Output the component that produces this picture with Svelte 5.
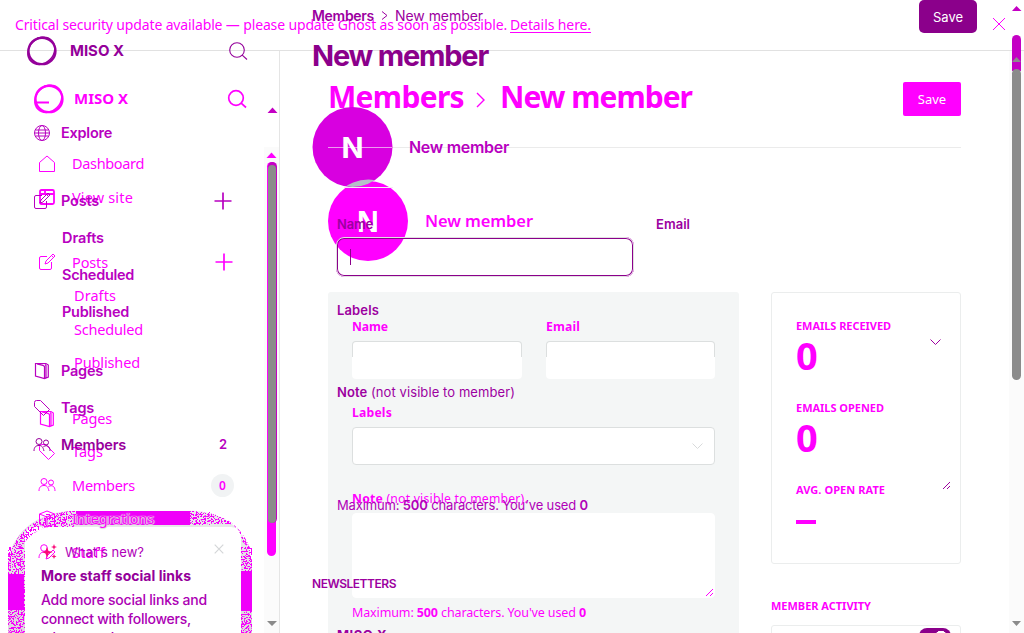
<script>
  function fit(node, width) {
    const natural = node.getBoundingClientRect().width;
    node.style.letterSpacing = (width - natural) / node.textContent.length + 'px';
  }
  const baseNav = [
    { t: 'Dashboard', w: 72, i: 'home' },
    { t: 'View site', w: 61, i: 'site' },
    { t: 'Posts', w: 36, i: 'edit', gap: 32, plus: true },
    { t: 'Drafts', w: 42, sub: true },
    { t: 'Scheduled', w: 69, sub: true },
    { t: 'Published', w: 66, sub: true },
    { t: 'Pages', w: 40, i: 'pages', gap: 22.5 },
    { t: 'Tags', w: 31, i: 'tag' },
    { t: 'Members', w: 63, i: 'people', count: '0' },
    { t: 'Integrations', w: 82, i: 'box', halo: true },
    { t: 'Staff', w: 33, i: 'staff' }
  ];
  const topNav = [
    { t: 'Explore', w: 51, i: 'globe' },
    { t: 'Posts', w: 38, i: 'edit', gap: 31, plus: true },
    { t: 'Drafts', w: 42, sub: true },
    { t: 'Scheduled', w: 72, sub: true },
    { t: 'Published', w: 67, sub: true },
    { t: 'Pages', w: 42, i: 'pages', gap: 22 },
    { t: 'Tags', w: 33, i: 'tag' },
    { t: 'Members', w: 65, i: 'people', count: '2', active: true }
  ];
  const stats = [
    { t: 'EMAILS RECEIVED', w: 95, v: '0' },
    { t: 'EMAILS OPENED', w: 88, v: '0' },
    { t: 'AVG. OPEN RATE', w: 89, v: '' }
  ];
</script>

{#snippet icon(name)}
  <svg class="icon" width="18" height="18" viewBox="0 0 18 18">
    {#if name === 'home'}<path d="M1.5 7.5 9 1l7.5 6.5v9h-15z" />
    {:else if name === 'site'}<path stroke-width="1.8" d="M3.500 2h11Q16 2 16 3.500v11q0 1.500-1.500 1.500h-11Q2 16 2 14.500v-11Q2 2 3.500 2zM2 6h14M7 2v4" />
    {:else if name === 'edit'}<path d="M9 3.5H3Q1.500 3.500 1.500 5v10q0 1.500 1.500 1.500h9q1.500 0 1.500-1.500V9M7 11l1-3 7-7 2 2-7 7zM13.5 2.5l2 2" />
    {:else if name === 'pages'}<path stroke-width="1.200" d="M2.5 1.5h10.500l2.300 1.500v12L11.500 16.5 2.5 14zM4 1.800l6 1.500 1.500 1.200v12M12 2.5l1 1v12" />
    {:else if name === 'tag'}<path d="M1.5 3.500q0-2 2-2h4l9 9-6 6-9-9z" />
    {:else if name === 'people'}<circle cx="6" cy="5.500" r="3" /><circle cx="13" cy="6.500" r="2.5" /><path d="M1 15c0-4 2-5.500 5-5.500s4 1.500 5 5.500M10.500 10.500c4-2 6.500 0 6.500 4.500" />
    {:else if name === 'box'}<path d="m9 1 7.5 3v10L9 17l-7.500-3V4zM1.500 4 9 7l7.500-3M9 7v10" />
    {:else if name === 'staff'}<circle cx="6" cy="5" r="3.3" /><path d="M1 15c0-4 2-6 5-6 2 0 3 1 3 1M8 16l1-3 6-6 2 2-6 6z" />
    {:else if name === 'globe'}<circle cx="9" cy="9" r="7.5" /><ellipse cx="9" cy="9" rx="3.5" ry="7.500" /><path d="M2.500 6h13M2.500 12h13M1.500 9h15" />{/if}
  </svg>
{/snippet}

{#snippet ring(cut)}
  <svg width="32" height="32" viewBox="0 0 32 32" fill="none" stroke="currentColor">
    <ellipse cx="17" cy="16" rx="13.5" ry="13.2" stroke-width="2.3" />
    <ellipse cx="16.500" cy="15.800" rx="14.600" ry="12.300" stroke-width="1.600" transform="rotate(-45 16.500 16)" />
    <path d="M12 3Q20 0 27 6" stroke-width="1" />
    {#if cut}<path d="M4 19.500h13" stroke-width="2" />{/if}
  </svg>
{/snippet}

{#snippet search(heavy)}
  <svg width="20" height="20" viewBox="0 0 20 20" fill="none" stroke="currentColor" stroke-width={heavy ? 1.7 : 1.1}><circle cx="9" cy="9" r="7.300" /><path d="m14.200 14.200 4.800 4.300" /></svg>
{/snippet}

{#snippet nav(items)}
  {#each items as n}
    <div class="row" class:sub={n.sub} class:halo={n.halo} class:active={n.active} style:margin-top={(n.gap ?? 0) + 'px'}>
      {#if n.i}{@render icon(n.i)}{/if}
      <span class="label"><span use:fit={n.w}>{n.t}</span></span>
      {#if n.plus}<svg class="plus" width="18" height="18" viewBox="0 0 18 18"><path d="M9 .5v17M.500 9h17" /></svg>{/if}
      {#if n.count}<b class="count">{n.count}</b>{/if}
    </div>
  {/each}
{/snippet}

<div class="page">
  <svg class="glow" width="250" height="130" viewBox="0 0 250 130">
    <defs>
      <filter id="grain" x="0" y="0" width="100%" height="100%">
        <feTurbulence type="fractalNoise" baseFrequency=".6" numOctaves="2" seed="4" />
        <feColorMatrix values="0 0 0 0 .94  0 0 0 0 0  0 0 0 0 .98  24 0 0 0 -12" />
        <feComposite in2="SourceGraphic" operator="in" />
      </filter>
      <linearGradient id="fade" x1="0" x2="0" y1="0" y2="1"><stop offset="0" stop-color="#e9ebeb" /><stop offset="1" stop-color="#dadada" /></linearGradient>
    </defs>
    <path fill="url(#fade)" d="M0 130V55C2 22 28 2 62 0h125c32 2 53 20 57 52v78h-11V26q0-10-10-10H27q-10 0-10 10v104z" />
    <g fill="#f000fa" filter="url(#grain)">
      <path d="M0 130V36h17v94zM233 130V36h11v94zM2 44C8 20 30 4 62 0h125c30 2 48 16 56 40l-9-10q-2-14-12-17H56Q26 14 12 38z" />
      <path d="M38 3h30v13H38zM178 1h24v13h-24z" />
    </g>
    <path fill="#f000fa" d="M0 63h16v36H0zM233 60h11v40h-11zM68 0h114v14H68z" />
  </svg>

  <div class="layer base">
    <div class="banner">
      <span><span use:fit={492}>Critical security update available — please update Ghost as soon as possible.</span><u use:fit={81}>Details here.</u></span>
      <svg width="14" height="14" viewBox="0 0 14 14"><path d="m1 1 12 12M13 1 1 13" /></svg>
    </div>
    <div class="body">
      <aside>
        <div class="brand">{@render ring(true)}<span class="label"><b use:fit={54}>MISO X</b></span>{@render search(true)}</div>
        <nav>{@render nav(baseNav)}</nav>
      </aside>
      <main>
        <header>
          <h1><span use:fit={136}>Members</span><svg width="10" height="16" viewBox="0 0 10 16"><path d="m1 1 7 7-7 7" /></svg><span use:fit={192}>New member</span></h1>
          <button>Save</button>
        </header>
        <div class="person"><div class="avatar">N</div><b use:fit={108}>New member</b></div>
        <div class="content">
          <section class="panel">
            <div class="pair">
              <div><label for="an"><b use:fit={36}>Name</b></label><div class="box" id="an"></div></div>
              <div><label for="ae"><b use:fit={34}>Email</b></label><div class="box" id="ae"></div></div>
            </div>
            <label for="al"><b use:fit={40}>Labels</b></label>
            <div class="box full" id="al"><svg width="11" height="7" viewBox="0 0 11 7"><path d="m.5.5 5 5 5-5" /></svg></div>
            <label for="at"><span use:fit={176}><b>Note</b> (not visible to member).</span></label>
            <div class="area" id="at"><svg width="9" height="9" viewBox="0 0 9 9"><path d="M1 8 8 1M5 8l3-3" /></svg></div>
            <p><span use:fit={234}>Maximum: <b>500</b> characters. You've used <b>0</b></span></p>
          </section>
          <section class="side">
            <div class="stats">
              {#each stats as s}
                <div class="stat"><div class="cap"><b use:fit={s.w}>{s.t}</b></div>
                  {#if s.v}<div class="num">{s.v}</div>{:else}<div class="dash"></div>{/if}</div>
              {/each}
            </div>
            <div class="cap activity"><b use:fit={100}>MEMBER ACTIVITY</b></div>
            <div class="feed"></div>
          </section>
        </div>
      </main>
    </div>
  </div>

  <div class="layer over">
    <aside>
      <div class="brand">{@render ring(false)}<span class="label"><b use:fit={54}>MISO X</b></span>{@render search(false)}</div>
      <nav>{@render nav(topNav)}</nav>
      <article>
        <div class="whats">
          <svg width="16" height="16" viewBox="0 0 16 16"><path fill="#fa0a78" d="m6 3 1.500 4L12 8 7.500 9.500 6 14 4.500 9.500 1 8l3.500-1zM13 0l.8 2.200L16 3l-2.200.8L13 6l-.8-2.200L10 3l2.200-.8zM13 10l.7 1.800 1.800.7-1.800.7L13 15l-.7-1.800-1.800-.7 1.800-.7z" /></svg>
          <span class="label"><span use:fit={79}>What's new?</span></span>
          <svg class="shut" width="10" height="10" viewBox="0 0 10 10"><path stroke="#d4d6d8" stroke-width="1.200" d="m.7.7 8.600 8.600M9.300.7.7 9.300" /></svg>
        </div>
        <h3><span use:fit={150}>More staff social links</span></h3>
        <div class="copy"><span use:fit={166}>Add more social links and</span><br /><span use:fit={150}>connect with followers,</span><br /><span use:fit={118}>wherever they are</span></div>
      </article>
    </aside>
    <main>
      <div class="top">
        <span class="crumb"><b use:fit={62}>Members</b><svg width="7" height="9" viewBox="0 0 7 9"><path d="m1 .5 5 4-5 4" /></svg><span use:fit={88}>New member</span></span>
        <button>Save</button>
      </div>
      <h1><span use:fit={176}>New member</span></h1>
      <div class="person">
        <svg width="81" height="82" viewBox="0 0 81 82">
          <defs><clipPath id="disc"><circle cx="40.500" cy="41" r="40" /></clipPath></defs>
          <circle cx="40.500" cy="41" r="40" fill="#d800e0" />
          <circle cx="56.500" cy="113.500" r="40" fill="#b5bfc8" clip-path="url(#disc)" />
          <path d="M16 41.500h64" stroke="#ee9af0" />
          <path d="M32 81.500h49" stroke="#f5eaf5" />
          <text x="40.500" y="52" text-anchor="middle" fill="#fff" font-size="29" font-weight="700">N</text>
        </svg>
        <b use:fit={100}>New member</b>
      </div>
      <div class="form">
        <div class="two">
          <div><label for="bn"><b use:fit={36}>Name</b></label><div class="focus" id="bn"><i></i></div></div>
          <div><label for="be"><b use:fit={34}>Email</b></label><div id="be"></div></div>
        </div>
        <label class="l2" for="bl"><b use:fit={42}>Labels</b></label>
        <div class="pick" id="bl"><svg width="11" height="7" viewBox="0 0 11 7"><path d="m.5.5 5 5 5-5" /></svg></div>
        <label class="l3" for="bt"><span use:fit={178}><b>Note</b> (not visible to member)</span></label>
        <div class="note" id="bt"><svg width="9" height="9" viewBox="0 0 9 9"><path d="M1 8 8 1M5 8l3-3" /></svg></div>
        <p><span use:fit={251}>Maximum: <b>500</b> characters. You’ve used <b>0</b></span></p>
      </div>
      <div class="news"><b use:fit={84}>NEWSLETTERS</b></div>
      <div class="last"><b use:fit={50}>MISO X</b><span class="toggle"></span></div>
    </main>
  </div>

  <svg class="bars" width="1024" height="633" viewBox="0 0 1024 633">
    <path fill="#fafafa" fill-opacity=".8" d="M264 147h15v486h-15zM1009 51h15v582h-15z" />
    <path fill="#c400c4" d="m267.500 113 5-5.500 5 5.500zM1012 11l4.500-5 5 5z" />
    <path fill="#ff00ff" d="m266.500 158 5-5.500 5 5.500z" />
    <rect x="267" y="162" width="9" height="394" rx="4.500" fill="#ff00ff" />
    <rect x="268" y="162" width="9" height="361" rx="4.500" fill="#c400c4" />
    <rect x="268" y="165" width="8" height="358" rx="4" fill="#8b8b8b" />
    <path fill="#c400c4" d="M1012 71V39.500a4.500 4.500 0 0 1 9 0V71z" />
    <rect x="1012" y="69" width="9" height="311" rx="4.500" fill="#8b8b8b" />
    <path fill="#8b8b8b" d="m1012 62 4.500-5 4.500 5zM1012 621h9l-4.500 5zM267 621h10l-5 5z" />
  </svg>
</div>

<style>
  :global(body) { margin: 0; background: #fff; }
  .page { position: relative; width: 1024px; height: 633px; overflow: hidden; background: #fff; }
  .page * { box-sizing: border-box; }
  .layer { position: absolute; inset: 0; overflow: hidden; display: flex; white-space: nowrap; }
  .glow { position: absolute; left: 8px; top: 511px; }
  .bars { position: absolute; inset: 0; }
  svg { flex: none; display: block; }
  h1, h3, p { margin: 0; }
  button { border: 0; padding: 0; font: inherit; color: #fff; width: 58px; }
  label, p { display: flex; align-items: center; font-size: 12.5px; }
  .icon, .plus { fill: none; stroke: currentColor; }
  .label { flex: 1; }
  .brand, .row, .whats { display: flex; align-items: center; }

  .base { flex-direction: column; color: #f0f; font-family: "Noto Sans", sans-serif; }
  .banner { height: 51px; flex: none; border-bottom: 1px solid #e1e1e1; display: flex; justify-content: space-between; align-items: center; padding: 0 18px 2px 15px; font-size: 14px; }
  .banner svg { fill: none; stroke: currentColor; }
  .banner u { margin-left: 3px; text-underline-offset: 2px; }
  .body { display: flex; flex: 1; min-height: 0; }
  .base aside { width: 280px; flex: none; border-right: 1px solid #e5e5e5; padding: 32px 32px 0; }
  .base .brand { height: 32px; font-size: 15px; }
  .base .brand .label { padding: 0 0 2px 10px; }
  .base nav { padding-top: 32px; }
  .base .row { height: 33.400px; font-size: 14.500px; padding-left: 6px; }
  .base .row .label { padding-bottom: 1px; }
  .base .icon { margin-right: 16px; }
  .base .sub { padding-left: 42px; }
  .base .plus { margin-right: 14px; stroke-width: 1.700; }
  .base .count { width: 23px; height: 23px; border-radius: 50%; background: #f1f3f4; display: flex; justify-content: center; align-items: center; margin-right: 13px; font-size: 12px; font-weight: 600; }
  .halo { text-shadow: 0 0 1px #ddd, 1px 0 1px #ddd, -1px 0 1px #ddd, 0 1px 1px #ddd; }
  .base main { width: 633px; margin-left: 48px; }
  .base header { height: 97px; border-bottom: 1px solid #ebebeb; display: flex; align-items: center; justify-content: space-between; }
  .base h1 { display: flex; align-items: center; font-size: 30px; line-height: 40px; margin-top: -5px; }
  .base h1 svg { margin: 6px 14px 0 12px; fill: none; stroke: currentColor; stroke-width: 1.400; }
  .base button { height: 34px; background: #f0f; border-radius: 2px; font-size: 13px; }
  .base .person { margin-top: 32px; height: 81px; display: flex; align-items: center; font-size: 16.500px; }
  .base .person b { margin-left: 17px; font-weight: 600; }
  .avatar { width: 80px; height: 80px; border-radius: 50%; background: #f0f; color: #fff; display: flex; justify-content: center; align-items: center; font-size: 28px; font-weight: 700; }
  .content { margin-top: 31px; display: flex; gap: 32px; }
  .panel { width: 411px; height: 360px; flex: none; background: #f4f6f6; border-radius: 3px; padding: 24px; }
  .panel label { height: 21px; margin-bottom: 4px; font-size: 12.200px; }
  .pair { display: grid; grid-template-columns: 170px 169px; gap: 24px; }
  .box, .area { border: 1px solid #dcdfdf; background: #fff; border-radius: 4px; }
  .box { height: 38px; margin-bottom: 23px; }
  .pair .box { border-color: transparent; background: linear-gradient(#fff, #fff) padding-box, linear-gradient(#dcdfdf 0 16px, #fff 16px) border-box; }
  .full { display: flex; align-items: center; justify-content: flex-end; padding-right: 11px; }
  .full svg { fill: none; stroke: #d8dadb; }
  .area { height: 85px; border-color: #fff; display: flex; align-items: flex-end; justify-content: flex-end; }
  .area svg, .note svg, .pick svg, .crumb svg { fill: none; stroke: currentColor; }
  .panel p { height: 21px; margin-top: 4px; }
  .side { width: 190px; }
  .stats { height: 272px; border: 1px solid #ebeded; border-radius: 3px; padding: 23px 24px; }
  .stat { height: 82px; }
  .cap { height: 20px; display: flex; align-items: center; font-size: 11px; padding-bottom: 2px; }
  .num { height: 40px; line-height: 40px; font-size: 38px; font-weight: 700; margin-top: -1px; }
  .dash { width: 20px; height: 4px; background: #f0f; margin-top: 20px; }
  .activity { margin-top: 32px; }
  .feed { margin-top: 9px; height: 40px; border: 1px solid #ebeded; border-radius: 3px; }

  .over { color: #9c00a0; font-family: Inter, sans-serif; }
  .over aside { width: 280px; flex: none; padding: 35px 25px 0; }
  .over .brand { height: 32px; font-size: 15px; color: #94009a; padding-right: 7px; }
  .over .brand .label { padding: 0 0 1px 13px; }
  .over nav { padding-top: 47px; color: #b800c0; }
  .over .row { height: 37px; font-size: 14.500px; font-weight: 600; padding-left: 8px; }
  .over .row .label, .over .count { padding-bottom: 1px; }
  .over .icon { margin-right: 10px; }
  .over .sub { padding-left: 37px; }
  .over .active { color: #98009c; }
  .over .plus { margin-right: 23px; stroke-width: 1.700; }
  .over .count { width: 20px; margin-right: 22px; text-align: center; font-size: 13px; font-weight: 600; color: #b800c0; }
  article { height: 140px; margin-top: 64px; width: 215px; padding: 16px; font-size: 14px; }
  .whats { height: 17px; font-size: 13px; }
  .whats .label { padding-left: 8px; color: #b000b8; }
  .shut { margin-bottom: 5px; }
  h3 { font-size: 14px; line-height: 20px; margin-top: 6px; color: #94009a; font-weight: 700; }
  .copy { font-size: 14px; font-weight: 500; line-height: 19px; margin-top: 4px; color: #ac00b4; }
  .over main { width: 665px; margin-left: 32px; }
  .top { height: 32px; display: flex; justify-content: space-between; font-size: 14px; }
  .crumb { display: flex; align-items: center; padding-bottom: 1px; }
  .crumb b { font-weight: 600; }
  .crumb svg { margin: 0 7px; }
  .over button { height: 33px; background: #8b008b; border-radius: 5px; font-size: 13px; }
  .over h1 { height: 40px; line-height: 40px; font-size: 29px; margin-top: 4px; color: #8b008b; }
  .over .person { height: 80px; margin-top: 31px; display: flex; align-items: center; font-size: 16px; color: #b800c0; }
  .over .person b { margin-left: 16px; font-weight: 600; }
  .form { padding: 26px 25px 0 24px; }
  .form label, .form p { height: 22px; padding: 0 0 1px 1px; font-size: 13px; }
  .form b, .news b { font-weight: 600; }
  .two { display: grid; grid-template-columns: 298px 1fr; gap: 21px; }
  .focus { height: 40px; margin-top: 2px; border: 1.500px solid #c800cc; outline: 1px solid #e2e0e2; outline-offset: -1px; box-shadow: inset 0 0 0 1px #8b008b; border-radius: 8px; padding: 11px 13px; }
  .focus i { display: block; width: 1px; height: 16px; background: #8b008b; }
  .form .l2 { margin-top: 22px; }
  .pick { height: 40px; margin-top: 2px; display: flex; align-items: center; justify-content: flex-end; padding: 0 11px 1px 0; }
  .form .l3 { margin-top: 18px; }
  .note { height: 86px; margin-top: 2px; display: flex; align-items: flex-end; justify-content: flex-end; padding: 0 1px 1px; }
  .form p { margin-top: 3px; color: #b000b8; }
  .news { height: 22px; line-height: 22px; margin-top: 57px; font-size: 12px; }
  .last { margin-top: 29px; height: 22px; display: flex; justify-content: space-between; align-items: center; padding: 0 26px 0 25px; font-size: 13px; }
  .toggle { width: 32px; height: 16px; margin-top: 2px; border-radius: 8px; background: radial-gradient(circle at 22px 9px, #fff 6px, #8b008b 6.500px); }
</style>
